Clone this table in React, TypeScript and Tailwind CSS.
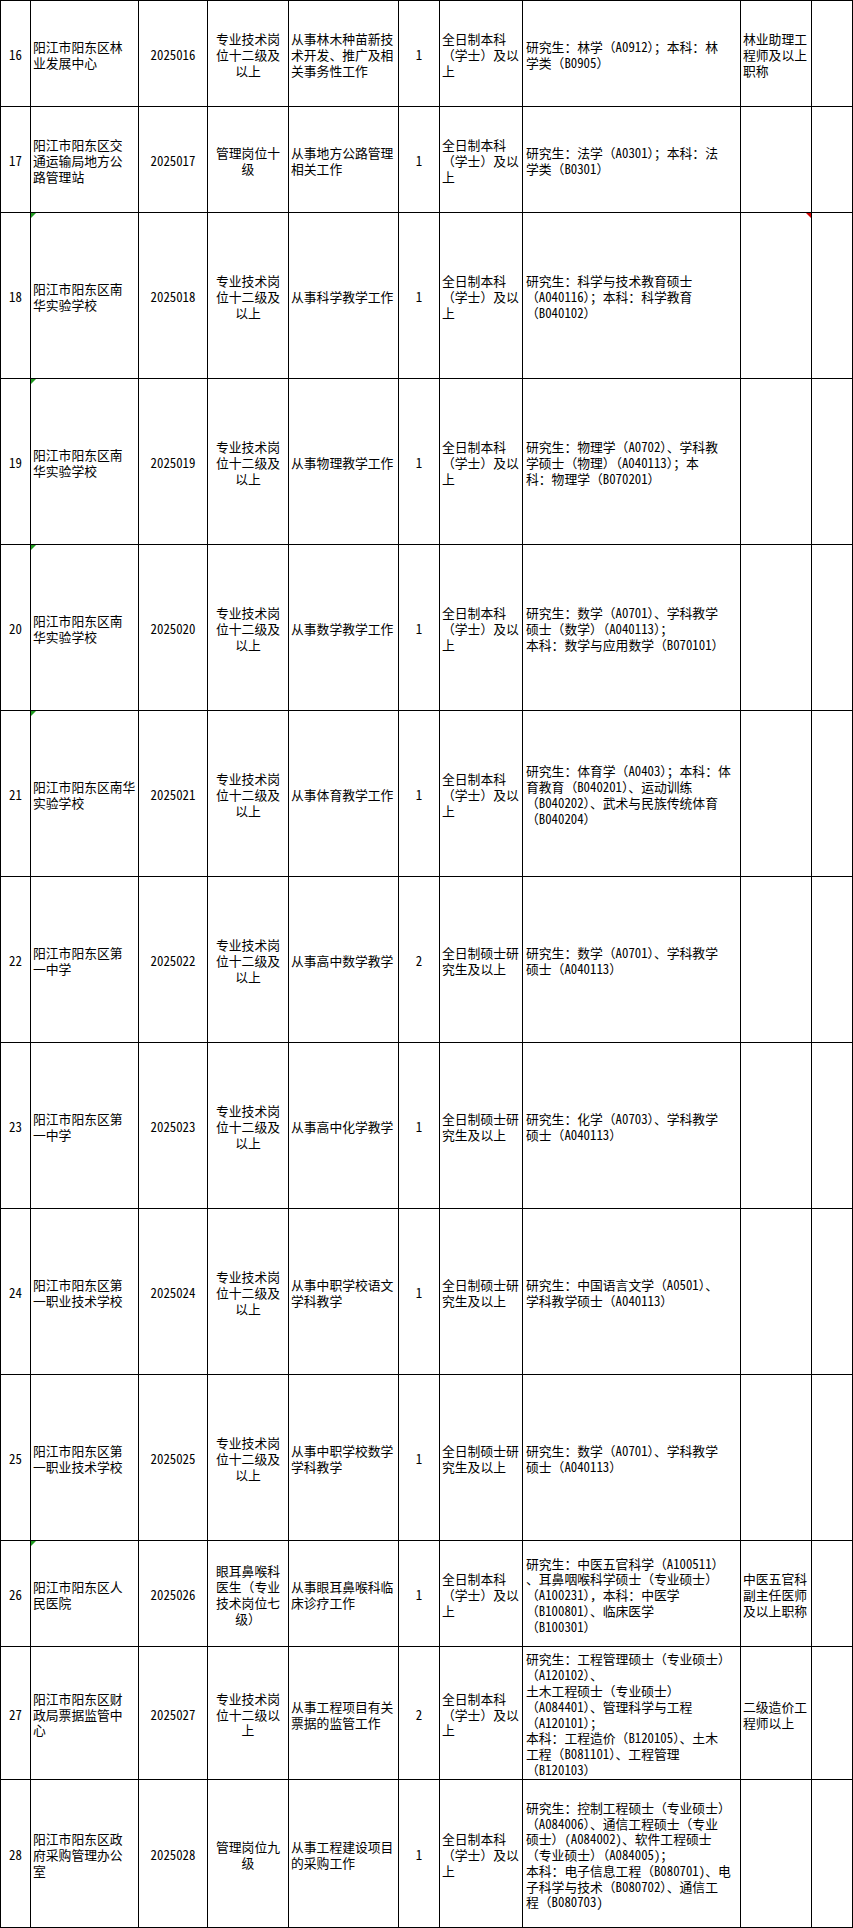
type Row = {
  no: string;
  unit: string[];
  code: string;
  post: string[];
  duty: string[];
  count: string;
  edu: string[];
  major: string[];
  title: string[];
  h: string;
  flag?: boolean;
  note?: boolean;
};

const BK = ['全日制本科', '（学士）及以', '上'];
const SS = ['全日制硕士研', '究生及以上'];
const ZY = ['专业技术岗', '位十二级及', '以上'];
const NH = ['阳江市阳东区南', '华实验学校'];

const rows: Row[] = [
  {
    no: '16',
    unit: ['阳江市阳东区林', '业发展中心'],
    code: '2025016',
    post: ZY,
    duty: ['从事林木种苗新技', '术开发、推广及相', '关事务性工作'],
    count: '1',
    edu: BK,
    major: ['研究生：林学（A0912）；本科：林', '学类（B0905）'],
    title: ['林业助理工', '程师及以上', '职称'],
    h: 'h-[106px]',
  },
  {
    no: '17',
    unit: ['阳江市阳东区交', '通运输局地方公', '路管理站'],
    code: '2025017',
    post: ['管理岗位十', '级'],
    duty: ['从事地方公路管理', '相关工作'],
    count: '1',
    edu: BK,
    major: ['研究生：法学（A0301）；本科：法', '学类（B0301）'],
    title: [],
    h: 'h-[106px]',
  },
  {
    no: '18',
    unit: NH,
    code: '2025018',
    post: ZY,
    duty: ['从事科学教学工作'],
    count: '1',
    edu: BK,
    major: ['研究生：科学与技术教育硕士', '（A040116）；本科：科学教育', '（B040102）'],
    title: [],
    h: 'h-[166px]',
    flag: true,
    note: true,
  },
  {
    no: '19',
    unit: NH,
    code: '2025019',
    post: ZY,
    duty: ['从事物理教学工作'],
    count: '1',
    edu: BK,
    major: ['研究生：物理学（A0702）、学科教', '学硕士（物理）（A040113）；本', '科：物理学（B070201）'],
    title: [],
    h: 'h-[166px]',
    flag: true,
  },
  {
    no: '20',
    unit: NH,
    code: '2025020',
    post: ZY,
    duty: ['从事数学教学工作'],
    count: '1',
    edu: BK,
    major: ['研究生：数学（A0701）、学科教学', '硕士（数学）（A040113）；', '本科：数学与应用数学（B070101）'],
    title: [],
    h: 'h-[166px]',
    flag: true,
  },
  {
    no: '21',
    unit: ['阳江市阳东区南华', '实验学校'],
    code: '2025021',
    post: ZY,
    duty: ['从事体育教学工作'],
    count: '1',
    edu: BK,
    major: [
      '研究生：体育学（A0403）；本科：体',
      '育教育（B040201）、运动训练',
      '（B040202）、武术与民族传统体育',
      '（B040204）',
    ],
    title: [],
    h: 'h-[166px]',
    flag: true,
  },
  {
    no: '22',
    unit: ['阳江市阳东区第', '一中学'],
    code: '2025022',
    post: ZY,
    duty: ['从事高中数学教学'],
    count: '2',
    edu: SS,
    major: ['研究生：数学（A0701）、学科教学', '硕士（A040113）'],
    title: [],
    h: 'h-[166px]',
  },
  {
    no: '23',
    unit: ['阳江市阳东区第', '一中学'],
    code: '2025023',
    post: ZY,
    duty: ['从事高中化学教学'],
    count: '1',
    edu: SS,
    major: ['研究生：化学（A0703）、学科教学', '硕士（A040113）'],
    title: [],
    h: 'h-[166px]',
  },
  {
    no: '24',
    unit: ['阳江市阳东区第', '一职业技术学校'],
    code: '2025024',
    post: ZY,
    duty: ['从事中职学校语文', '学科教学'],
    count: '1',
    edu: SS,
    major: ['研究生：中国语言文学（A0501）、', '学科教学硕士（A040113）'],
    title: [],
    h: 'h-[166px]',
  },
  {
    no: '25',
    unit: ['阳江市阳东区第', '一职业技术学校'],
    code: '2025025',
    post: ZY,
    duty: ['从事中职学校数学', '学科教学'],
    count: '1',
    edu: SS,
    major: ['研究生：数学（A0701）、学科教学', '硕士（A040113）'],
    title: [],
    h: 'h-[166px]',
  },
  {
    no: '26',
    unit: ['阳江市阳东区人', '民医院'],
    code: '2025026',
    post: ['眼耳鼻喉科', '医生（专业', '技术岗位七', '级）'],
    duty: ['从事眼耳鼻喉科临', '床诊疗工作'],
    count: '1',
    edu: BK,
    major: [
      '研究生：中医五官科学（A100511）',
      '、耳鼻咽喉科学硕士（专业硕士）',
      '（A100231），本科：中医学',
      '（B100801）、临床医学',
      '（B100301）',
    ],
    title: ['中医五官科', '副主任医师', '及以上职称'],
    h: 'h-[106px]',
    flag: true,
  },
  {
    no: '27',
    unit: ['阳江市阳东区财', '政局票据监管中', '心'],
    code: '2025027',
    post: ['专业技术岗', '位十二级以', '上'],
    duty: ['从事工程项目有关', '票据的监管工作'],
    count: '2',
    edu: BK,
    major: [
      '研究生：工程管理硕士（专业硕士）',
      '（A120102）、',
      '土木工程硕士（专业硕士）',
      '（A084401）、管理科学与工程',
      '（A120101）；',
      '本科：工程造价（B120105）、土木',
      '工程（B081101）、工程管理',
      '（B120103）',
    ],
    title: ['二级造价工', '程师以上'],
    h: 'h-[133px]',
  },
  {
    no: '28',
    unit: ['阳江市阳东区政', '府采购管理办公', '室'],
    code: '2025028',
    post: ['管理岗位九', '级'],
    duty: ['从事工程建设项目', '的采购工作'],
    count: '1',
    edu: BK,
    major: [
      '研究生：控制工程硕士（专业硕士）',
      '（A084006）、通信工程硕士（专业',
      '硕士）(A084002)、软件工程硕士',
      '（专业硕士）（A084005)；',
      '本科：电子信息工程（B080701)、电',
      '子科学与技术（B080702）、通信工',
      '程（B080703)',
    ],
    title: [],
    h: 'h-[148px]',
  },
];

function Lines({ lines, center }: { lines: string[]; center?: boolean }) {
  return (
    <div className={center ? 'text-center' : 'text-left'}>
      {lines.map((l, i) => (
        <div key={i} className="whitespace-nowrap">
          {l}
        </div>
      ))}
    </div>
  );
}

const cell = 'relative flex items-center border-r border-b border-black pt-[3px]';

function TableRow({ row }: { row: Row }) {
  return (
    <div
      className={`grid grid-cols-[30px_108px_69px_81px_110px_41px_83px_218px_71px_41px] ${row.h}`}
    >
      <div className={`${cell} justify-center`}>{row.no}</div>
      <div className={`${cell} pl-[2px]`}>
        {row.flag && (
          <span className="absolute left-0 top-0 h-0 w-0 border-t-[5px] border-r-[5px] border-t-[#1f9a1f] border-r-transparent" />
        )}
        <Lines lines={row.unit} />
      </div>
      <div className={`${cell} justify-center`}>{row.code}</div>
      <div className={`${cell} justify-center`}>
        <Lines lines={row.post} center />
      </div>
      <div className={`${cell} pl-[2px]`}>
        <Lines lines={row.duty} />
      </div>
      <div className={`${cell} justify-center`}>{row.count}</div>
      <div className={`${cell} pl-[2px]`}>
        <Lines lines={row.edu} />
      </div>
      <div className={`${cell} pl-[3px]`}>
        <Lines lines={row.major} />
      </div>
      <div className={`${cell} pl-[2px]`}>
        {row.note && (
          <span className="absolute right-0 top-0 h-0 w-0 border-t-[5px] border-l-[5px] border-t-[#d00000] border-l-transparent" />
        )}
        <Lines lines={row.title} />
      </div>
      <div className={cell} />
    </div>
  );
}

export default function App() {
  return (
    <div className="w-[853px] bg-white text-black text-[12.8px] leading-[15.8px] font-['Noto_Sans_Mono_CJK_SC','Noto_Sans_CJK_SC',sans-serif]">
      <div className="border-l border-t border-black">
        {rows.map((r) => (
          <TableRow key={r.no} row={r} />
        ))}
      </div>
    </div>
  );
}
